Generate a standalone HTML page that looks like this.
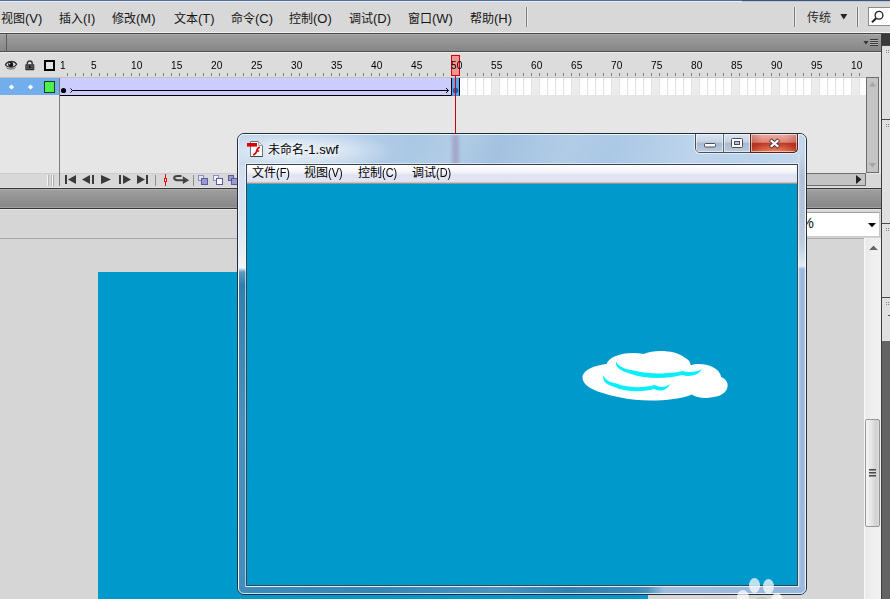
<!DOCTYPE html>
<html lang="zh-CN">
<head>
<meta charset="utf-8">
<title>未命名-1.swf</title>
<style>
*{margin:0;padding:0;box-sizing:border-box;}
html,body{width:890px;height:599px;overflow:hidden;background:#d6d6d6;}
body{position:relative;font-family:"Liberation Sans","Noto Sans CJK SC",sans-serif;font-size:13px;color:#1a1a1a;}
.abs{position:absolute;}
svg{position:absolute;overflow:visible;}
/* ---------- main menu ---------- */
#topline{left:0;top:0;width:890px;height:1px;background:#4a6ea6;}
#topline2{left:0;top:1px;width:890px;height:1px;background:#ececec;}
#menubar{left:0;top:2px;width:890px;height:30px;background:#d8d8d8;}
#menubar span{position:absolute;top:8px;font-size:12px;line-height:18px;white-space:nowrap;color:#151515;}
#menubar span i{font-style:normal;font-size:13px;}
.vsep{position:absolute;width:1px;background:#7a7a7a;box-shadow:1px 0 0 #ececec,-1px 0 0 #e4e4e4;}
#menuwhite{left:0;top:32px;width:890px;height:1px;background:#f2f2f2;}
#menudark{left:0;top:33px;width:890px;height:1px;background:#484848;}
.darkbar{background:linear-gradient(#a0a0a0,#868686);}
#bar1{left:0;top:34px;width:881px;height:17px;box-shadow:inset 0 1px 0 #ababab;}
#bar1line{left:0;top:51px;width:881px;height:1px;background:#505050;box-shadow:0 1px 0 #e8e8e8;}
#bar1tab{left:6px;top:34px;width:1px;height:17px;background:#5a5a5a;}
#searchbox{left:868px;top:7px;width:30px;height:19px;background:#fff;border:1px solid #8c8c8c;}
/* ---------- timeline ---------- */
#tlhead{left:0;top:52px;width:881px;height:25px;background:#dcdcdc;box-shadow:inset 0 1px 0 #ececec;}
#tlheadline{left:0;top:77px;width:866px;height:1px;background:#c2c2c2;}
#tlbody{left:0;top:78px;width:881px;height:96px;background:#e6e6e6;}
#layer{left:0;top:78px;width:59px;height:17px;background:#73aeec;}
#tlvline{left:59px;top:78px;width:1px;height:108px;background:#7a7a7a;z-index:3;}
.num{z-index:2;position:absolute;top:58.5px;font-size:11px;line-height:13px;color:#000;letter-spacing:0;transform:scaleX(.92);transform-origin:0 0;}
#ticks{left:60px;top:73px;width:800px;height:3px;background:repeating-linear-gradient(90deg,transparent 0,transparent 7px,#7d7d7d 7px,#7d7d7d 8px);}
#tween{left:60px;top:78px;width:391px;height:17px;background:#ccccff;}
#tweenline{left:60px;top:95px;width:392px;height:1px;background:#000;}
#frames{left:460px;top:78px;width:406px;height:17px;background-color:#fff;background-image:
 repeating-linear-gradient(90deg,transparent 0,transparent 7px,#e2e2e2 7px,#e2e2e2 8px),
 repeating-linear-gradient(90deg,#fff 0,#fff 32px,#ececec 32px,#ececec 40px);}
#frameswhite{left:60px;top:96px;width:806px;height:1px;background:#f4f4f4;}
#kf50{left:451px;top:78px;width:9px;height:18px;background:#5fa3ea;border-left:1px solid #000;border-right:1px solid #000;border-bottom:1px solid #3b8ee6;}
#phbox{left:451px;top:55px;width:9px;height:21px;background:rgba(255,120,120,.72);border:1px solid #cc0000;}
#phline{left:455px;top:76px;width:1px;height:58px;background:#cc0000;}
#tlctl{left:0;top:174px;width:881px;height:14px;background:#d8d8d8;}
#tlctltop{left:0;top:173px;width:866px;height:1px;background:#cecece;}
#bar2top{left:0;top:188px;width:881px;height:1px;background:#363636;box-shadow:0 -1px 0 #e0e0e0;}
#bar2{left:0;top:189px;width:881px;height:19px;box-shadow:inset 0 1px 0 #adadad,inset 0 -1px 0 #a0a0a0;}
#bar2bot{left:0;top:208px;width:881px;height:1px;background:#363636;box-shadow:0 1px 0 #e6e6e6;}
.sb{background:#c4c4c4;border:1px solid #6e6e6e;}
#vsb1{left:866px;top:77px;width:13px;height:96px;}
#hsb1{left:460px;top:173px;width:406px;height:13px;}
/* ---------- stage area ---------- */
#editbar{left:0;top:209px;width:881px;height:29px;background:#d6d6d6;box-shadow:inset 0 1px 0 #e6e6e6;}
#editline{left:0;top:238px;width:864px;height:1px;background:#a8a8a8;}
#stage{left:98px;top:272px;width:550px;height:327px;background:#0099cc;}
#zoombox{left:700px;top:212px;width:180px;height:25px;background:#fff;border:1px solid #c8c8c8;border-top-color:#a0a0a0;}
#zoompct{left:801px;top:214px;font-size:14.5px;line-height:18px;color:#151515;}
#vsb2{left:864px;top:238px;width:17px;height:361px;background:linear-gradient(90deg,#f7f7f7 0,#f7f7f7 1px,#eaeaea 2px,#efefef 8px,#f0f0f0 100%);}
#thumb2{left:865px;top:419px;width:15px;height:108px;border:1px solid #979797;border-radius:2px;background:linear-gradient(90deg,#f6f6f6,#e6e6e6 40%,#d2d2d2 75%,#dadada);}
#rightline{left:881px;top:34px;width:1px;height:565px;background:#3c3c3c;}
#rightcol{left:882px;top:34px;width:8px;height:565px;background:#e0e0e0;}
#rcdark0{left:882px;top:34px;width:8px;height:11px;background:#3a3a3a;}
#rcdark1{left:882px;top:341px;width:8px;height:258px;background:#636363;}
.rcline{position:absolute;left:882px;width:8px;height:1px;background:#4a4a4a;}
.grip{position:absolute;left:886px;width:1px;height:1px;background:#888;box-shadow:2px 0 0 #888,0 2px 0 #888,2px 2px 0 #888;}
/* ---------- swf window ---------- */
#win{left:237px;top:133px;width:570px;height:462px;border-radius:7px;border:1px solid #222e3c;overflow:hidden;
 background:#c6d8ec;}
#winhl{left:0;top:0;width:568px;height:460px;border-radius:6px;border:1px solid rgba(255,255,255,.75);}
#title{left:0;top:0;width:568px;height:31px;background:
 radial-gradient(ellipse 95px 20px at 62px 17px,rgba(255,255,255,.6) 0,rgba(255,255,255,.42) 50%,rgba(255,255,255,0) 100%),
 linear-gradient(115deg,rgba(255,255,255,0) 0,rgba(255,255,255,0) 30%,rgba(255,255,255,.14) 38%,rgba(255,255,255,0) 46%,rgba(255,255,255,.12) 58%,rgba(255,255,255,0) 66%,rgba(255,255,255,.12) 80%,rgba(255,255,255,0) 88%),
 linear-gradient(90deg,#c2d6ea 0,#b6cfe9 20%,#a8c6e3 32%,#a3c2e0 45%,#a8c6e4 62%,#b4cee9 80%,#c4d8ed 100%);}
#titletext{left:30px;top:7px;font-size:12px;line-height:18px;color:#000;white-space:nowrap;
 text-shadow:0 0 5px #fff,0 0 8px #fff;}
#titletext i{font-style:normal;font-size:13px;}
#cframe{left:8px;top:30px;width:552px;height:422px;border:1px solid #39434f;background:#0099cc;box-shadow:0 0 0 1px rgba(255,255,255,.55);}
#wmenu{left:0;top:0;width:550px;height:19px;background:linear-gradient(#ffffff 0,#f4f5fb 35%,#dfe2f0 55%,#e3e6f2 85%,#c8c8cc 92%,#7c7c7c 100%);}
#wmenu span{position:absolute;top:0px;font-size:12px;line-height:16px;color:#000;white-space:nowrap;}
#wmenu span i{font-style:normal;font-size:13px;display:inline-block;transform:scaleX(.84);transform-origin:0 50%;}
#ctrls{left:457px;top:-1px;width:103px;height:20px;border:1px solid #43505e;border-radius:0 0 5px 5px;overflow:hidden;box-shadow:0 0 0 1px rgba(255,255,255,.6);}
.cb{position:absolute;top:0;height:18px;box-shadow:inset 0 0 0 1px rgba(255,255,255,.55);}
#bmin{left:0;width:28px;background:linear-gradient(#dbe5f0 0,#c6d3e2 45%,#a9bbd0 50%,#bccbdd 100%);border-right:1px solid #5a6878;}
#bmax{left:28px;width:27px;background:linear-gradient(#dbe5f0 0,#c6d3e2 45%,#a9bbd0 50%,#bccbdd 100%);border-right:1px solid #5a6878;}
#bclose{left:55px;width:46px;background:radial-gradient(ellipse 26px 9px at 50% 100%,rgba(240,150,110,.75),rgba(240,150,110,0)),linear-gradient(90deg,rgba(120,20,10,.25),rgba(120,20,10,0) 25%,rgba(120,20,10,0) 75%,rgba(120,20,10,.25)),linear-gradient(#eeb0a5 0,#dd8374 46%,#c03a28 52%,#c4402c 75%,#cf5138 100%);}
#closeb{left:512px;top:-1px;width:48px;height:20px;border:1px solid #5a2018;border-top:none;border-radius:0 0 5px 0;}
#lborder{left:1px;top:31px;width:7px;height:429px;background:linear-gradient(#d0deee 0,#dbe6f2 60px,#f0f5fa 103px,#5b9ac2 107px,#2f7fae 120px,#3d88b6 180px,#4a90bd 260px,#438dbc 429px);}
#rborder{left:560px;top:20px;width:8px;height:440px;background:linear-gradient(90deg,rgba(255,255,255,.35) 0,rgba(255,255,255,0) 3px,rgba(255,255,255,0) 5px,rgba(255,255,255,.3) 8px),linear-gradient(#c4d5e8 0,#aebfd6 22px,#b0c1d8 55px,#bccbdf 90px,#d4dfec 105px,#e2eaf3 112px,#9ab8dc 115px,#9ab8dc 440px);}
#bborder{left:1px;top:453px;width:567px;height:7px;background:linear-gradient(90deg,#3f8bba 0,#3585b5 25%,#4a93c0 45%,#2f80b0 58%,#3d8aba 70%,#4c92be 72%,#9fbcde 75%,#9ab8dc 100%);}
</style>
</head>
<body>
<div id="topline" class="abs"></div>
<div id="topline2" class="abs"></div>
<div class="abs" style="left:742px;top:1px;width:148px;height:1px;background:#c2c4c8"></div>
<div class="abs" style="left:742px;top:0;width:148px;height:1px;background:#365585"></div>
<div id="menubar" class="abs">
 <span style="left:1px">视图<i>(V)</i></span>
 <span style="left:59px">插入<i>(I)</i></span>
 <span style="left:112px">修改<i>(M)</i></span>
 <span style="left:174px">文本<i>(T)</i></span>
 <span style="left:231px">命令<i>(C)</i></span>
 <span style="left:289px">控制<i>(O)</i></span>
 <span style="left:349px">调试<i>(D)</i></span>
 <span style="left:408px">窗口<i>(W)</i></span>
 <span style="left:470px">帮助<i>(H)</i></span>
 <span style="left:807px;top:6.500px;color:#2a2a2a">传统</span>
 <div class="vsep" style="left:526px;top:5px;height:20px"></div>
 <div class="vsep" style="left:794px;top:5px;height:20px"></div>
 <div class="vsep" style="left:857px;top:5px;height:20px"></div>
 <svg style="left:840px;top:12px" width="8" height="6"><path d="M0.300,0H7.300L3.800,5.500Z" fill="#222"/></svg>
</div>
<div id="searchbox" class="abs"></div>
<svg style="left:870px;top:9px" width="16" height="16"><circle cx="9" cy="6.300" r="3.900" fill="none" stroke="#222" stroke-width="1.300"/><path d="M6.200,9.200L2,13.200" stroke="#222" stroke-width="2"/></svg>
<div id="menuwhite" class="abs"></div>
<div id="menudark" class="abs"></div>
<div id="bar1" class="abs darkbar"></div>
<div id="bar1tab" class="abs"></div>
<div id="bar1line" class="abs"></div>
<svg style="left:863px;top:39px" width="18" height="10"><path d="M0.500,2H5.500L3,5.500Z" fill="#333"/><path d="M7,0.500H15M7,2.500H15M7,4.500H15M7,6.500H15" stroke="#3a3a3a" stroke-width="1"/><path d="M7,1.500H15M7,3.500H15M7,5.500H15" stroke="#b0b0b0" stroke-width="1"/></svg>

<div id="tlhead" class="abs"></div>
<div id="tlheadline" class="abs"></div>
<div id="tlbody" class="abs"></div>
<div id="layer" class="abs"></div>
<div id="ticks" class="abs"></div>
<div id="tween" class="abs"></div>
<div id="frames" class="abs"></div>
<div id="tweenline" class="abs"></div>
<div id="kf50" class="abs"></div>
<div id="tlvline" class="abs"></div>
<span class="num" style="left:59.5px">1</span>
<span class="num" style="left:91px">5</span>
<span class="num" style="left:131px">10</span>
<span class="num" style="left:171px">15</span>
<span class="num" style="left:211px">20</span>
<span class="num" style="left:251px">25</span>
<span class="num" style="left:291px">30</span>
<span class="num" style="left:331px">35</span>
<span class="num" style="left:371px">40</span>
<span class="num" style="left:411px">45</span>
<span class="num" style="left:451px">50</span>
<span class="num" style="left:491px">55</span>
<span class="num" style="left:531px">60</span>
<span class="num" style="left:571px">65</span>
<span class="num" style="left:611px">70</span>
<span class="num" style="left:651px">75</span>
<span class="num" style="left:691px">80</span>
<span class="num" style="left:731px">85</span>
<span class="num" style="left:771px">90</span>
<span class="num" style="left:811px">95</span>
<span class="num" style="left:850.5px;width:14px;overflow:hidden">10</span>
<!-- header icons -->
<svg style="left:5px;top:60px" width="12" height="10" viewBox="0 0 12 10">
 <path d="M0.400,4.800C2.500,0.800 9.500,0.600 11.600,4.300C9.500,8 3,8.300 0.400,4.800Z" fill="#e0e0e0" stroke="#222" stroke-width="1.100"/>
 <path d="M0.400,4.600C2.500,0.400 9.500,0.200 11.600,4.100" fill="none" stroke="#333" stroke-width="0.900"/>
 <circle cx="5.700" cy="4.500" r="2.500" fill="#111"/>
 <circle cx="4.700" cy="3.800" r="0.700" fill="#fff"/>
 <path d="M1.500,7.800C4,9.600 8.500,9.400 10.500,7.600" stroke="#444" stroke-width=".8" fill="none"/>
</svg>
<svg style="left:25px;top:60px" width="10" height="11" viewBox="0 0 10 11">
 <path d="M2.300,4.500V3.300C2.300,0.300 7.200,0.300 7.200,3.300V4.500" fill="none" stroke="#333" stroke-width="1.400"/>
 <rect x="0.300" y="4.200" width="9" height="6" rx="0.800" fill="#2e2e2e"/>
 <rect x="1" y="5.700" width="7.600" height="0.900" fill="#777"/><rect x="1" y="7.700" width="7.600" height="0.900" fill="#777"/>
 <rect x="4" y="5.600" width="1.500" height="2.600" fill="#111"/>
</svg>
<div class="abs" style="left:44px;top:60px;width:11px;height:11px;border:2px solid #000;background:#e4e4e4"></div>
<!-- layer row -->
<svg style="left:0;top:78px" width="59" height="17"><path d="M11.500,6.400L14.100,9L11.500,11.600L8.900,9ZM30.500,6.400L33.100,9L30.500,11.600L27.900,9Z" fill="#fff"/></svg>
<div class="abs" style="left:44px;top:81px;width:11px;height:12px;border:1px solid #1e3a1e;background:#4df04d"></div>
<svg style="left:60px;top:78px" width="400" height="18" viewBox="0 0 400 18">
 <circle cx="3.5" cy="12.5" r="2.6" fill="#000"/>
 <path d="M10.5,10.5L12.5,12.5L10.5,14.5" fill="none" stroke="#000" stroke-width="1"/>
 <path d="M12.5,12.5H388.500" stroke="#000" stroke-width="1"/>
 <path d="M386,10L388.500,12.500L386,15" fill="none" stroke="#000" stroke-width="1"/>
 <circle cx="395.500" cy="12.500" r="2.700" fill="#1c5ea8"/>
</svg>
<div id="phbox" class="abs"></div>
<div id="phline" class="abs"></div>
<div id="vsb1" class="abs sb"></div>
<svg style="left:869px;top:82px" width="8" height="5"><path d="M0,4.5H7L3.5,0Z" fill="#a4a4a4"/></svg>
<svg style="left:869px;top:163px" width="8" height="5"><path d="M0,0H7L3.5,4.5Z" fill="#a4a4a4"/></svg>

<div id="tlctl" class="abs"></div>
<div id="tlctltop" class="abs"></div>
<div id="hsb1" class="abs sb"></div>
<svg style="left:856px;top:175px" width="6" height="9"><path d="M0,0V9L5.5,4.5Z" fill="#222"/></svg>
<!-- grip -->
<svg style="left:47px;top:175px" width="8" height="11"><path d="M0.800,0V11M3.200,0V11M5.600,0V11" stroke="#fff" stroke-width="1"/><path d="M1.800,0V11M4.200,0V11M6.600,0V11" stroke="#a6a6a6" stroke-width="1"/></svg>
<!-- playback controls -->
<svg style="left:60px;top:173px" width="190" height="15" viewBox="0 0 190 15">
 <g fill="#3a3a3a">
 <rect x="5" y="2" width="2" height="9"/><path d="M16,2V11L8,6.500Z"/>
 <path d="M30,2V11L22,6.500Z"/><rect x="32" y="2" width="2" height="9"/>
 <path d="M41,2V11L51,6.500Z"/>
 <rect x="59" y="2" width="2" height="9"/><path d="M63,2V11L71,6.500Z"/>
 <path d="M77,2V11L85,6.500Z"/><rect x="86" y="2" width="2" height="9"/>
 </g>
 <rect x="95" y="2" width="1" height="11" fill="#8e8e8e"/>
 <rect x="105" y="1" width="1" height="12" fill="#f00"/><rect x="104.500" y="5.500" width="2" height="3" fill="#fff" stroke="#f00" stroke-width="1"/>
 <path d="M124,7.200H117.500C113,7.200 113,3 117.500,3H121.500" fill="none" stroke="#444" stroke-width="2"/>
 <path d="M122.800,3.300V11.100L129.200,7.200Z" fill="#444"/>
 <rect x="133" y="2" width="1" height="11" fill="#8e8e8e"/>
 <g stroke="#5a5aa0" stroke-width="1">
 <rect x="138.500" y="2.500" width="5" height="5" fill="#e4e4f6" stroke="#8c8cc8"/><rect x="141.500" y="5.500" width="6" height="6" fill="#9a9acb"/>
 <rect x="153.500" y="2.500" width="5" height="5" fill="#f0f0fa" stroke="#8c8cc8"/><rect x="156.500" y="5.500" width="6" height="6" fill="#fff"/>
 <rect x="168.500" y="2.500" width="5" height="5" fill="#9a9acb"/><rect x="171.500" y="5.500" width="6" height="6" fill="#9a9acb"/>
 </g>
</svg>
<div id="bar2top" class="abs"></div>
<div id="bar2" class="abs darkbar"></div>
<div id="bar2bot" class="abs"></div>

<div id="editbar" class="abs"></div>
<div id="editline" class="abs"></div>
<div id="stage" class="abs"></div>
<div id="zoombox" class="abs"></div>
<div id="zoompct" class="abs">%</div>
<svg style="left:867.5px;top:223px" width="8" height="5"><path d="M0,0H8L4,4.300Z" fill="#000"/></svg>
<div id="vsb2" class="abs"></div>
<svg style="left:869px;top:245px" width="9" height="6"><path d="M0,5.500L4.500,0.800L9,5.500L4.500,3.500Z" fill="#444"/><path d="M0.500,5L4.500,1L8.500,5" fill="#666" /></svg>
<div id="thumb2" class="abs"></div>
<div class="abs" style="left:869px;top:469px;width:7px;height:9px;background:repeating-linear-gradient(#4a4a4a 0,#4a4a4a 1px,#8e8e8e 1px,#8e8e8e 2px,transparent 2px,transparent 3px)"></div>
<div id="rightline" class="abs"></div>
<div id="rightcol" class="abs"></div>
<div id="rcdark0" class="abs"></div>
<div id="rcdark1" class="abs"></div>
<div class="rcline" style="top:45px"></div>
<div class="rcline" style="top:119px"></div>
<div class="rcline" style="top:223px"></div>
<div class="rcline" style="top:297px"></div>
<div class="grip" style="top:50px"></div>
<div class="grip" style="top:124px"></div>
<div class="grip" style="top:228px"></div>
<div class="grip" style="top:302px"></div>
<div class="abs" style="left:888px;top:315px;width:2px;height:1px;background:#555"></div>

<div id="win" class="abs">
 <div id="title" class="abs"></div>
 <div id="lborder" class="abs"></div>
 <div id="rborder" class="abs"></div>
 <div id="bborder" class="abs"></div>
 <div id="winhl" class="abs"></div>
 <div class="abs" style="left:214px;top:1px;width:7px;height:29px;background:rgba(150,120,165,.42);filter:blur(1.500px)"></div>
 <svg style="left:9px;top:7px" width="17" height="18" viewBox="0 0 17 18">
  <path d="M3.500,0.500H11.500L15.500,4.500V15.500H3.500Z" fill="#fff" stroke="#6a7482" stroke-width="1"/>
  <path d="M3.500,15.500H15.500" stroke="#3c434c" stroke-width="1"/>
  <path d="M11.500,0.500V4.500H15.500" fill="#e4e8ee" stroke="#8a929c" stroke-width=".8"/>
  <rect x="0" y="2" width="10" height="3.600" fill="#d80000"/>
  <path d="M13,6.300C10.400,6 10.300,8.600 9.500,10.600C8.800,12.500 8,13.900 6,13.500" fill="none" stroke="#d40000" stroke-width="1.700"/>
  <path d="M9.300,9.900H12.200" stroke="#d40000" stroke-width="1.500"/>
 </svg>
 <div id="titletext" class="abs">未命名<i>-1.swf</i></div>
 <div id="ctrls" class="abs">
  <div id="bmin" class="cb"></div><div id="bmax" class="cb"></div><div id="bclose" class="cb"></div>
  <svg style="left:8px;top:9px" width="13" height="5"><rect x=".5" y=".5" width="11" height="3.500" fill="#fff" stroke="#4a4f5c" stroke-width="1" rx="1"/></svg>
  <svg style="left:35px;top:4px" width="13" height="11"><rect x=".5" y=".5" width="11" height="9" fill="#fff" stroke="#4a4f5c" stroke-width="1" rx="1"/><rect x="3.500" y="3.500" width="5" height="3" fill="#b7c5d6" stroke="#4a4f5c" stroke-width="1"/></svg>
  <svg style="left:73px;top:5px" width="11" height="9" viewBox="0 0 11 9"><path d="M2.600,2L8.400,7M8.400,2L2.600,7" stroke="#4a3a40" stroke-width="3.800" stroke-linecap="square"/><path d="M2.600,2L8.400,7M8.400,2L2.600,7" stroke="#fff" stroke-width="2.300" stroke-linecap="square"/></svg>
 </div>
 <div id="closeb" class="abs"></div>
 <div id="cframe" class="abs">
  <div id="wmenu" class="abs">
   <span style="left:5px">文件<i>(F)</i></span>
   <span style="left:57px">视图<i>(V)</i></span>
   <span style="left:111px">控制<i>(C)</i></span>
   <span style="left:165px">调试<i>(D)</i></span>
  </div>
  <svg style="left:313px;top:165px" width="190" height="90" viewBox="0 0 890 422">
   <path d="M105,222C108,185 170,165 218,160C228,125 300,98 392,112C440,92 540,92 585,130C605,140 612,152 612,165C660,150 745,165 756,222C796,235 800,290 742,310C690,325 640,318 618,302C540,335 380,338 290,318C200,300 105,275 105,222Z" fill="#fff"/>
   <path d="M262,148C275,175 310,185 345,190C420,210 520,205 575,192C600,200 640,200 665,183C650,216 600,221 572,211C500,231 400,231 330,205C290,194 256,178 262,148Z" fill="#08eefa"/>
   <path d="M203,212C215,240 240,245 260,250C320,275 400,270 445,258C465,270 500,270 515,252C505,286 460,290 440,277C400,290 310,295 255,267C225,259 196,243 203,212Z" fill="#08eefa"/>
  </svg>
 </div>
</div>
<!-- watermark -->
<div class="abs" style="left:749px;top:578px;width:11px;height:15px;border-radius:50%;background:rgba(255,255,255,.72)"></div>
<div class="abs" style="left:763px;top:579px;width:11px;height:15px;border-radius:50%;background:rgba(255,255,255,.72)"></div>
<div class="abs" style="left:737px;top:590px;width:12px;height:15px;border-radius:50%;background:rgba(255,255,255,.72)"></div>
<div class="abs" style="left:771px;top:593px;width:12px;height:15px;border-radius:50%;background:rgba(255,255,255,.72)"></div>
<div class="abs" style="left:754px;top:597px;width:15px;height:10px;border-radius:50%;background:rgba(185,185,185,.6)"></div>
</body>
</html>
